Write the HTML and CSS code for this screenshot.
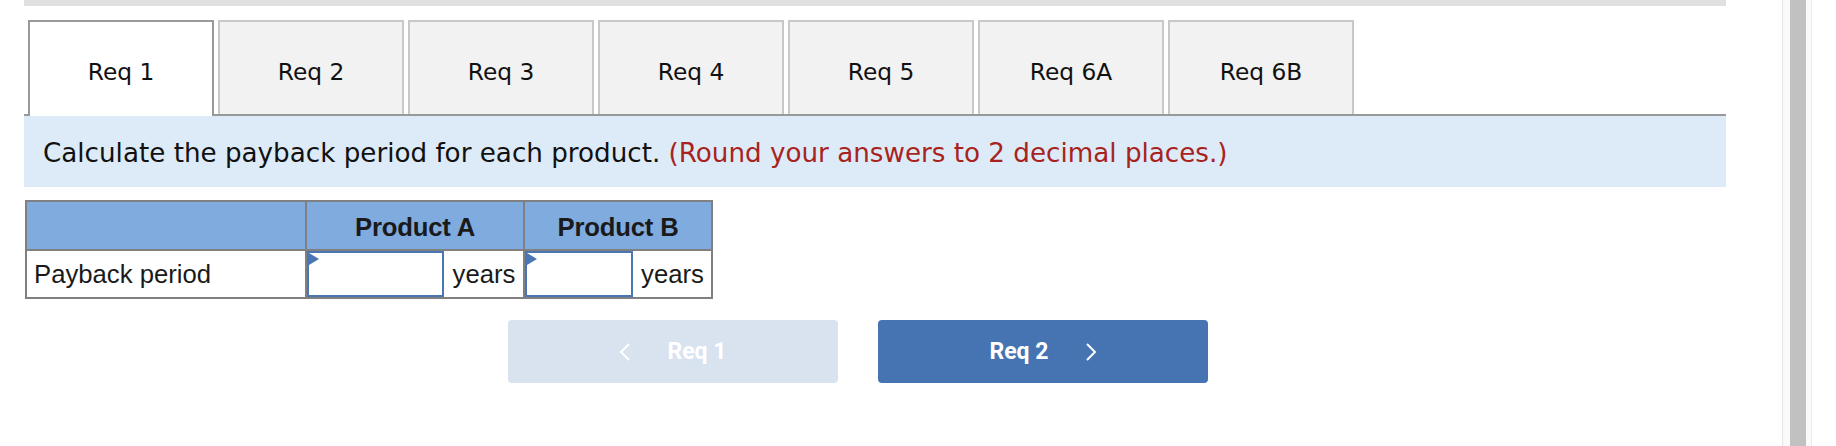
FILE: index.html
```html
<!DOCTYPE html>
<html>
<head>
<meta charset="utf-8">
<link rel="stylesheet" href="styles.css">
</head>
<body>
<div class="page">
  <main class="main">
    <div class="topbar"></div>
    <nav class="tabs">
      <div class="tab active">Req 1</div>
      <div class="tab">Req 2</div>
      <div class="tab">Req 3</div>
      <div class="tab">Req 4</div>
      <div class="tab">Req 5</div>
      <div class="tab">Req 6A</div>
      <div class="tab">Req 6B</div>
    </nav>
    <div class="instruction">Calculate the payback period for each product. <span class="hint">(Round your answers to 2 decimal places.)</span></div>
    <table class="grid">
      <colgroup>
        <col class="w-label">
        <col class="w-inA">
        <col class="w-unitA">
        <col class="w-inB">
        <col class="w-unitB">
      </colgroup>
      <tr class="head">
        <th class="c-label"></th>
        <th colspan="2" class="c-prod">Product A</th>
        <th colspan="2" class="c-prod">Product B</th>
      </tr>
      <tr class="row">
        <td class="c-label">Payback period</td>
        <td class="c-input"><span class="marker"></span><input type="text" class="field"></td>
        <td class="c-unit c-unitA">years</td>
        <td class="c-input"><span class="marker"></span><input type="text" class="field"></td>
        <td class="c-unit">years</td>
      </tr>
    </table>
    <div class="navbtns">
      <button class="btn prev">
        <svg class="chev" width="12" height="20" viewBox="0 0 12 20"><polyline points="10,2 2,10 10,18" fill="none" stroke="#fff" stroke-width="2"/></svg>
        <span>Req 1</span>
      </button>
      <button class="btn next">
        <span>Req 2</span>
        <svg class="chev" width="12" height="20" viewBox="0 0 12 20"><polyline points="2,2 10,10 2,18" fill="none" stroke="#fff" stroke-width="2"/></svg>
      </button>
    </div>
  </main>
  <div class="scrolltrack"><div class="thumb"></div></div>
</div>
</body>
</html>
```

FILE: styles.css
```css
* { box-sizing: border-box; }
html, body { margin: 0; padding: 0; background: #fff; }
body { width: 1836px; height: 446px; overflow: hidden; }

.page {
  display: flex;
  height: 446px;
}

.main {
  margin-left: 24px;
  width: 1702px;
  display: flex;
  flex-direction: column;
  align-items: flex-start;
}

.topbar {
  align-self: stretch;
  height: 6px;
  background: #e0e0e0;
}

.tabs {
  align-self: stretch;
  display: flex;
  align-items: flex-end;
  margin-top: 14px;
  padding-left: 4px;
  border-bottom: 2px solid #999;
  height: 96px;
}

.tab {
  width: 186px;
  height: 94px;
  margin-right: 4px;
  border: 2px solid #c8c8c8;
  border-bottom: none;
  background: #f2f2f2;
  display: flex;
  align-items: center;
  justify-content: center;
  padding-top: 6px;
  font-family: "DejaVu Sans", Verdana, sans-serif;
  font-size: 23.3px;
  color: #111;
}

.tab.active {
  height: 96px;
  margin-bottom: -2px;
  background: #fff;
  border-color: #999;
  padding-top: 4px;
  position: relative;
}

.instruction {
  align-self: stretch;
  height: 71px;
  background: #ddebf8;
  padding-left: 19px;
  display: flex;
  align-items: center;
  padding-top: 2px;
  font-family: "DejaVu Sans", Verdana, sans-serif;
  font-size: 26.2px;
  color: #111;
  white-space: pre;
}

.hint { color: #a8231d; }

.grid {
  margin-top: 13px;
  margin-left: 1px;
  width: 686px;
  table-layout: fixed;
  border-collapse: collapse;
  border: 2px solid #808080;
  font-family: "Liberation Sans", Arial, sans-serif;
  font-size: 25.7px;
  color: #1a1a1a;
}

.w-label { width: 280px; }
.w-inA { width: 138px; }
.w-unitA { width: 80px; }
.w-inB { width: 109px; }
.w-unitB { width: 79px; }

.grid th, .grid td { padding: 0; }

.head th {
  background: #80abdf;
  height: 49px;
  border: 2px solid #808080;
  font-weight: bold;
  text-align: center;
  letter-spacing: -0.2px;
  padding-top: 4px;
}

.row td {
  height: 48px;
  border-top: 2px solid #808080;
  border-bottom: 2px solid #808080;
  background: #fff;
  white-space: nowrap;
}

.row .c-label {
  border-right: 2px solid #808080;
  padding-left: 7px;
  padding-top: 1px;
}

.c-input {
  position: relative;
}

.field {
  display: block;
  width: 100%;
  height: 46px;
  margin: 0;
  border: 2px solid #4a77b4;
  background: #fff;
  outline: none;
}

.marker {
  position: absolute;
  left: 2px;
  top: 2px;
  width: 0;
  height: 0;
  border-top: 6px solid transparent;
  border-bottom: 6px solid transparent;
  border-left: 10px solid #4a77b4;
}

.row .c-unit {
  text-align: center;
  padding-left: 1px;
  padding-top: 1px;
}

.row .c-unitA { border-right: 2px solid #808080; }

.navbtns {
  display: flex;
  gap: 40px;
  margin-top: 21px;
  margin-left: 484px;
}

.btn {
  width: 330px;
  height: 63px;
  border: none;
  border-radius: 4px;
  display: flex;
  align-items: center;
  justify-content: center;
  gap: 36px;
  font-family: Roboto, "Liberation Sans", sans-serif;
  font-weight: bold;
  font-size: 23px;
  color: #fff;
  padding: 0;
}

.btn.prev { background: #d9e3f0; }
.btn.next { background: #4674b3; }

.chev { display: block; }

.scrolltrack {
  margin-left: 56px;
  width: 30px;
  height: 446px;
  background: #fafafa;
  border-left: 1px solid #e6e6e6;
  border-right: 1px solid #ededed;
  padding-left: 7px;
}

.thumb {
  width: 16px;
  height: 446px;
  background: #c1c1c1;
}
```
